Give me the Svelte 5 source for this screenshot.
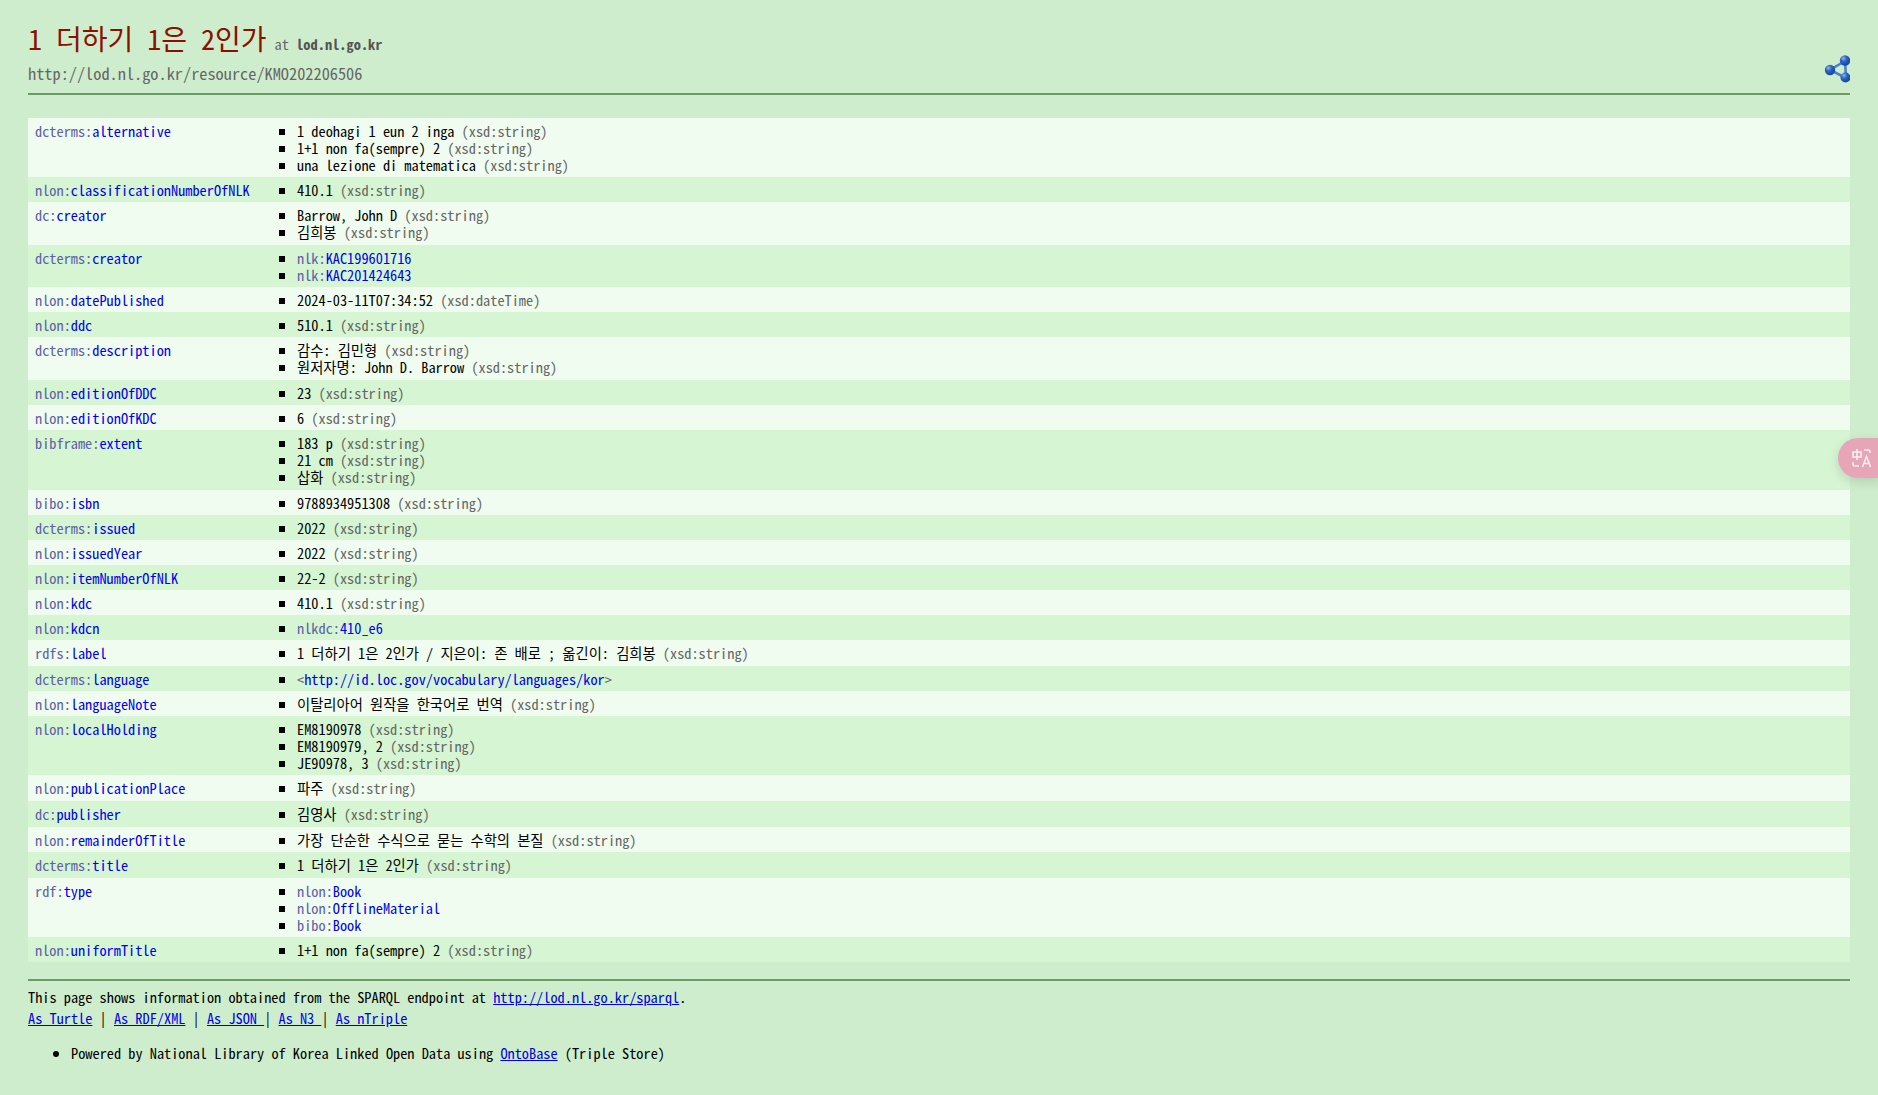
<script>
  const str = 'xsd:string';
  const rows = [
    ['dcterms', 'alternative', [
      { t: '1 deohagi 1 eun 2 inga', d: str },
      { t: '1+1 non fa(sempre) 2', d: str },
      { t: 'una lezione di matematica', d: str }
    ]],
    ['nlon', 'classificationNumberOfNLK', [{ t: '410.1', d: str }]],
    ['dc', 'creator', [{ t: 'Barrow, John D', d: str }, { t: '김희봉', d: str }]],
    ['dcterms', 'creator', [{ p: 'nlk', l: 'KAC199601716' }, { p: 'nlk', l: 'KAC201424643' }]],
    ['nlon', 'datePublished', [{ t: '2024-03-11T07:34:52', d: 'xsd:dateTime' }]],
    ['nlon', 'ddc', [{ t: '510.1', d: str }]],
    ['dcterms', 'description', [{ t: '감수: 김민형', d: str }, { t: '원저자명: John D. Barrow', d: str }]],
    ['nlon', 'editionOfDDC', [{ t: '23', d: str }]],
    ['nlon', 'editionOfKDC', [{ t: '6', d: str }]],
    ['bibframe', 'extent', [{ t: '183 p', d: str }, { t: '21 cm', d: str }, { t: '삽화', d: str }]],
    ['bibo', 'isbn', [{ t: '9788934951308', d: str }]],
    ['dcterms', 'issued', [{ t: '2022', d: str }]],
    ['nlon', 'issuedYear', [{ t: '2022', d: str }]],
    ['nlon', 'itemNumberOfNLK', [{ t: '22-2', d: str }]],
    ['nlon', 'kdc', [{ t: '410.1', d: str }]],
    ['nlon', 'kdcn', [{ p: 'nlkdc', l: '410_e6' }]],
    ['rdfs', 'label', [{ t: '1 더하기 1은 2인가 / 지은이: 존 배로 ; 옮긴이: 김희봉', d: str }]],
    ['dcterms', 'language', [{ u: 'http://id.loc.gov/vocabulary/languages/kor' }]],
    ['nlon', 'languageNote', [{ t: '이탈리아어 원작을 한국어로 번역', d: str }]],
    ['nlon', 'localHolding', [{ t: 'EM8190978', d: str }, { t: 'EM8190979, 2', d: str }, { t: 'JE90978, 3', d: str }]],
    ['nlon', 'publicationPlace', [{ t: '파주', d: str }]],
    ['dc', 'publisher', [{ t: '김영사', d: str }]],
    ['nlon', 'remainderOfTitle', [{ t: '가장 단순한 수식으로 묻는 수학의 본질', d: str }]],
    ['dcterms', 'title', [{ t: '1 더하기 1은 2인가', d: str }]],
    ['rdf', 'type', [{ p: 'nlon', l: 'Book' }, { p: 'nlon', l: 'OfflineMaterial' }, { p: 'bibo', l: 'Book' }]],
    ['nlon', 'uniformTitle', [{ t: '1+1 non fa(sempre) 2', d: str }]]
  ];

  // lines holding hangul sit a little taller in the reference
  const isKo = (v) => /[가-힣]/.test(v.t || '');
</script>

<div class="page">
  <header class="head">
    <div>
      <h1>1 더하기 1은 2인가<small>at <b>lod.nl.go.kr</b></small></h1>
      <div class="uri">http://lod.nl.go.kr/resource/KMO202206506</div>
    </div>
    <svg class="share" width="26" height="32" viewBox="0 0 26 32">
      <defs>
        <radialGradient id="ball" cx="0.35" cy="0.3" r="0.8">
          <stop offset="0" stop-color="#8fb4ea" />
          <stop offset="0.4" stop-color="#2a62bd" />
          <stop offset="1" stop-color="#173f98" />
        </radialGradient>
      </defs>
      <path d="M21 10 L6 19 L22 27 Z" fill="none" stroke="#4a82cc" stroke-width="2.6" />
      <circle cx="21" cy="9.5" r="5.2" fill="url(#ball)" />
      <circle cx="6" cy="19" r="5.2" fill="url(#ball)" />
      <circle cx="21.5" cy="26.5" r="5" fill="url(#ball)" />
    </svg>
  </header>
  <hr />

  <table>
    <tbody>
      {#each rows as [prefix, name, values], i}
        <tr class:odd={i % 2 === 0}>
          <td class="prop"><a href="#p"><span class="prefix">{prefix}:</span>{name}</a></td>
          <td class="vals">
            <ul>
              {#each values as v}
                <li class:ko={isKo(v)}>
                  {#if v.t}
                    {v.t} <span class="dtype">({v.d})</span>
                  {:else if v.l}
                    <a href="#v"><span class="prefix">{v.p}:</span>{v.l}</a>
                  {:else}
                    <span class="dtype">&lt;</span><a href="#v">{v.u}</a><span class="dtype">&gt;</span>
                  {/if}
                </li>
              {/each}
            </ul>
          </td>
        </tr>
      {/each}
    </tbody>
  </table>

  <hr class="foot-rule" />
  <footer>
    <div>This page shows information obtained from the SPARQL endpoint at <a class="ul" href="#s">http://lod.nl.go.kr/sparql</a>.</div>
    <div class="links">
      <a class="ul" href="#a">As Turtle</a> | <a class="ul" href="#b">As RDF/XML</a> | <a class="ul" href="#c">As JSON&nbsp;</a>| <a class="ul" href="#d">As N3&nbsp;</a>| <a class="ul" href="#e">As nTriple</a>
    </div>
    <ul class="powered">
      <li>Powered by National Library of Korea Linked Open Data using <a class="ul" href="#o">OntoBase</a> (Triple Store)</li>
    </ul>
  </footer>
</div>

<div class="translate">
  <svg width="22" height="22" viewBox="0 0 22 22" fill="none" stroke="#fbeef2" stroke-width="1.6">
    <path d="M2 5 H10 V10 H2 Z M6 2 V13" />
    <path d="M13 3 H17 Q19 3 19 5 V6" />
    <path d="M2 15 V17 Q2 19 4 19 H8" />
    <path d="M11.5 20 L15.5 9.5 L19.5 20 M13 16.5 H18" />
  </svg>
</div>

<style>
  :global(body) {
    margin: 0;
    background: #ceedcc;
    font-family: "Noto Sans Mono CJK KR", "Noto Sans CJK KR", monospace;
    font-size: 14.32px;
    line-height: 17px;
    color: #000;
  }
  .page {
    padding: 22px 28px 40px;
    box-sizing: border-box;
    min-height: 1095px;
  }
  .head {
    display: flex;
    justify-content: space-between;
    align-items: flex-end;
  }
  h1 {
    margin: 0;
    font-size: 28px;
    line-height: 33px;
    font-weight: normal;
    color: #8b1000;
  }
  small {
    margin-left: 8px;
    font-size: 14.4px;
    color: #666;
  }
  small b {
    color: #555;
  }
  .uri {
    margin-top: 3px;
    font-size: 16.32px;
    line-height: 20px;
    color: #666;
  }
  hr {
    border: 0;
    border-top: 2px solid #6a9a66;
    margin: 10px 0 23px;
    height: 0;
  }
  table {
    width: 100%;
    border-collapse: collapse;
  }
  tr {
    background: #d5f5d3;
  }
  tr.odd {
    background: #f0fcef;
  }
  td {
    padding: 4px 7px;
    vertical-align: top;
  }
  td.prop {
    width: 233px;
  }
  td.vals {
    padding-left: 4px;
  }
  ul {
    margin: 0;
    padding: 0 0 0 18px;
    list-style: square;
  }
  li.ko {
    line-height: 17.7px;
  }
  a {
    color: #0000ee;
    text-decoration: none;
  }
  a.ul {
    text-decoration: underline;
  }
  .prefix {
    color: #6060a8;
  }
  .dtype {
    color: #666;
  }
  .foot-rule {
    margin: 17px 0 7px;
  }
  .links {
    margin-top: 4px;
  }
  .powered {
    margin: 18px 0 0;
    padding-left: 43px;
    list-style: disc;
  }
  .translate {
    position: fixed;
    right: -4px;
    top: 438px;
    width: 44px;
    height: 40px;
    border-radius: 20px 0 0 20px;
    background: #e6a6b8;
    box-shadow: 0 4px 12px rgba(0, 0, 0, 0.12);
    display: flex;
    align-items: center;
    padding-left: 13px;
    box-sizing: border-box;
  }
</style>
